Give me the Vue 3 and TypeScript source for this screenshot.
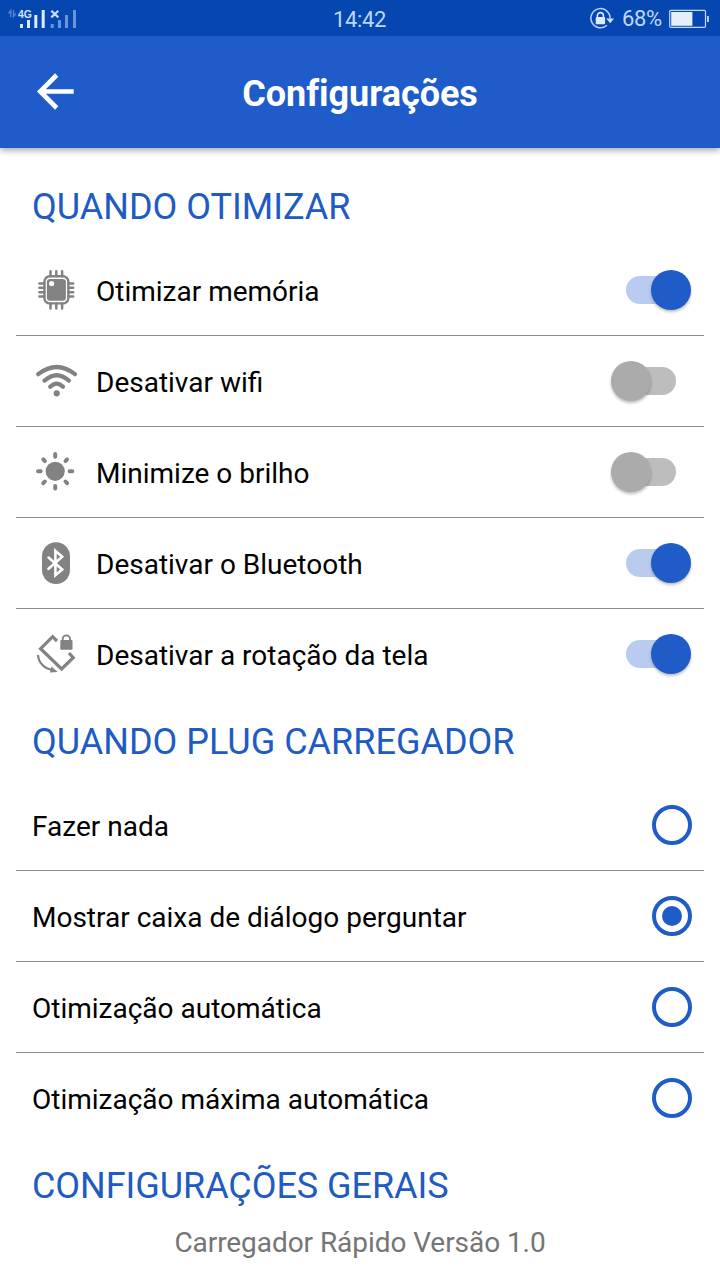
<script setup lang="ts">
import { ref } from 'vue'

type IconName = 'chip' | 'wifi' | 'sun' | 'bluetooth' | 'rotation'

interface Toggle {
  icon: IconName
  label: string
  on: boolean
}

const toggles = ref<Toggle[]>([
  { icon: 'chip', label: 'Otimizar memória', on: true },
  { icon: 'wifi', label: 'Desativar wifi', on: false },
  { icon: 'sun', label: 'Minimize o brilho', on: false },
  { icon: 'bluetooth', label: 'Desativar o Bluetooth', on: true },
  { icon: 'rotation', label: 'Desativar a rotação da tela', on: true },
])

const options: string[] = [
  'Fazer nada',
  'Mostrar caixa de diálogo perguntar',
  'Otimização automática',
  'Otimização máxima automática',
]
const selected = ref(1)
</script>

<template>
  <div class="screen">
    <div class="status">
      <svg class="signal" width="80" height="36" viewBox="0 0 80 36">
        <g stroke="#c8dcf8" stroke-width="1.5" opacity=".4" fill="none">
          <path d="M10.8 16V9.6L8.5 12.5M13.6 9v6.4l2.3-2.8" />
        </g>
        <text x="18" y="16.8" class="net" textLength="14" lengthAdjust="spacingAndGlyphs">4G</text>
        <path fill="#dbeafd" d="M20 23h3v4h-3zM27 19h3v8h-3zM34.3 14h3v13h-3zM41.7 9h3v18h-3z" />
        <path fill="#6995da" d="M50.7 23h3v4h-3zM58 19h3v8h-3zM65 14h3v13h-3zM73 9h3v18h-3z" />
        <path stroke="#c8dcf8" stroke-width="2.2" d="M51.3 9.8l7 6.6M58.3 9.8l-7 6.6" />
      </svg>
      <span class="clock">14:42</span>
      <div class="power">
        <svg width="26" height="24" viewBox="0 0 26 24">
          <path fill="none" stroke="#b9d3f7" stroke-width="1.5" d="M20.1 11.5A9.6 9.6 0 1 0 17 18.3" />
          <path fill="#d0e2fa" d="M16.2 11.6h7.8l-3.8 4.6z" />
          <rect x="5.7" y="9.9" width="9.4" height="7.4" rx="1" fill="#dbeafd" />
          <path fill="none" stroke="#dbeafd" stroke-width="1.6" d="M7.4 10.4V8.6a3 3 0 0 1 6 0v1.8" />
        </svg>
        <span class="percent">68%</span>
        <svg width="42" height="20" viewBox="0 0 42 20">
          <rect x=".7" y="1.4" width="35.8" height="17" rx="1.2" fill="none" stroke="#c3daf9" stroke-width="1.2" />
          <rect x="2.2" y="3" width="21.2" height="13.8" fill="#e5eefb" />
          <rect x="38" y="7" width="1.8" height="6" fill="#c3daf9" />
        </svg>
      </div>
    </div>

    <header class="bar">
      <svg class="back" width="40" height="40" viewBox="0 0 40 40">
        <path d="M37.7 19.5H5M20.7 3L4.2 19.5 20.7 36" fill="none" stroke="#fff" stroke-width="4.6" />
      </svg>
      <h1>Configurações</h1>
    </header>

    <main>
      <h2><span>QUANDO OTIMIZAR</span></h2>
      <ul>
        <li v-for="t in toggles" :key="t.icon" class="row">
          <svg class="icon" width="48" height="48" viewBox="0 0 48 48">
            <template v-if="t.icon === 'chip'">
              <path class="line" stroke-width="2.5" stroke-linecap="round" d="M18.5 5.2v5M24.3 5.2v5M30.1 5.2v5M18.5 37.5v5M24.3 37.5v5M30.1 37.5v5M7.4 17.4h5M7.4 21.8h5M7.4 26.2h5M7.4 30.6h5M36.2 17.4h5M36.2 21.8h5M36.2 26.2h5M36.2 30.6h5" />
              <rect class="line" stroke-width="2.4" x="12.4" y="10.2" width="24" height="27.2" rx="5.5" />
              <rect class="solid" x="14.9" y="12.9" width="19" height="21.8" rx="3.2" />
              <circle cx="19.6" cy="17.6" r="2.6" fill="#fff" />
            </template>
            <template v-else-if="t.icon === 'wifi'">
              <path class="line" stroke-width="4.2" stroke-linecap="round" d="M6.2 17.2Q24.7 2.8 43 17.2M12.5 23.6Q24.7 12.8 36.9 23.6M18.2 29.8Q24.7 23.4 31 29.8" />
              <circle class="solid" cx="24.7" cy="36.3" r="3.1" />
            </template>
            <template v-else-if="t.icon === 'sun'">
              <circle class="solid" cx="23.2" cy="23.3" r="9.6" />
              <path class="line" stroke-width="4" stroke-linecap="round" d="M23.2 6v2.7M23.2 37.9v2.7M6 23.3h2.7M37.6 23.3h2.7M11.3 11.4l1.6 1.7M35.1 11.4l-1.6 1.7M11.3 35.2l1.6-1.7M35.1 35.2l-1.6-1.7" />
            </template>
            <template v-else-if="t.icon === 'bluetooth'">
              <rect class="solid" x="10" y="3.2" width="28" height="41.8" rx="14" />
              <path fill="none" stroke="#fff" stroke-width="2.6" stroke-linecap="round" d="M16.5 18.6L30.2 30.4 23.4 36.2V11.8L30.2 17.8 16.5 29.8" />
            </template>
            <template v-else>
              <path class="line" stroke-width="3.2" d="M25 11L20.6 6.7 8.6 18.7 29.6 38.9 41.2 27.6 37 23" />
              <path class="line" stroke-width="2.2" d="M6 25C6.5 32.5 12 39.3 22 40.2" />
              <path class="solid" d="M19.3 36.6L25.7 42 18 42.4z" />
              <rect class="solid" x="28.3" y="10.1" width="12.2" height="9.6" rx="1" />
              <path class="line" stroke-width="1.9" d="M30.7 11V9a3.6 3.6 0 0 1 7.3 0V11" />
            </template>
          </svg>
          <span class="label">{{ t.label }}</span>
          <button class="switch" :class="{ on: t.on }" @click="t.on = !t.on"><i></i></button>
        </li>
      </ul>

      <h2><span>QUANDO PLUG CARREGADOR</span></h2>
      <ul>
        <li v-for="(o, i) in options" :key="o" class="row option" @click="selected = i">
          <span class="label">{{ o }}</span>
          <span class="radio" :class="{ on: selected === i }"></span>
        </li>
      </ul>

      <h2 class="general"><span>CONFIGURAÇÕES GERAIS</span></h2>
      <p class="version">Carregador Rápido Versão 1.0</p>
    </main>
  </div>
</template>

<style>
body {
  margin: 0;
  background: #fff;
}
</style>

<style scoped>
.screen {
  width: 720px;
  height: 1280px;
  overflow: hidden;
  background: #fff;
  font-family: Roboto, "Noto Sans", sans-serif;
  color: #000;
}
.status {
  position: relative;
  z-index: 1;
  height: 36px;
  background: #0646b0;
  display: grid;
  grid-template-columns: 1fr auto 1fr;
  align-items: center;
  color: #bdd8fb;
}
.net {
  font: bold 10.5px "Liberation Sans", sans-serif;
  fill: #cfe2fb;
}
.clock,
.percent {
  font-size: 22px;
  line-height: 36px;
  letter-spacing: -0.35px;
  padding-top: 2px;
}
.clock {
  margin-right: 1px;
}
.percent {
  padding: 0;
  width: 40px;
  margin: 0 7px 0 6px;
}
.power {
  display: flex;
  align-items: center;
  justify-content: flex-end;
  padding-right: 9px;
}
.bar {
  height: 112px;
  background: #1f5cc9;
  display: grid;
  grid-template-columns: 80px 1fr 80px;
  align-items: center;
  box-shadow: 0 2px 7px rgba(0, 0, 0, 0.38);
  position: relative;
}
.back {
  margin-left: 36px;
}
h1 {
  margin: 4px 0 0;
  font-size: 36px;
  line-height: 44px;
  font-weight: 700;
  letter-spacing: -0.04px;
  color: #fff;
  text-align: center;
}
main {
  padding: 16px 16px 0;
}
h2 {
  margin: 0;
  height: 81px;
  box-sizing: border-box;
  padding: 5px 16px 0;
  font-size: 36px;
  line-height: 76px;
  font-weight: 400;
  color: #205bc4;
  white-space: nowrap;
}
.general {
  letter-spacing: -0.06px;
}
ul {
  margin: 0;
  padding: 0;
  list-style: none;
}
.row {
  height: 90px;
  display: flex;
  align-items: center;
  padding: 0 12px 0 16px;
  border-bottom: 1px solid #8c8c8c;
}
.row:last-child {
  border-bottom: 0;
}
.icon {
  margin-right: 16px;
}
.line {
  fill: none;
  stroke: #828282;
}
.solid {
  fill: #828282;
}
.label {
  flex: 1;
  font-size: 28px;
  line-height: 36px;
  padding-top: 3px;
  white-space: nowrap;
}
.switch {
  width: 50px;
  height: 28px;
  border: 0;
  border-radius: 14px;
  padding: 0;
  margin-right: 16px;
  background: #bdbdbd;
  display: flex;
  align-items: center;
}
.switch i {
  flex: none;
  width: 40px;
  height: 40px;
  border-radius: 50%;
  background: #ababab;
  margin-left: -15px;
  box-shadow: 0 2px 3px rgba(0, 0, 0, 0.25);
}
.switch.on {
  background: #b9ccef;
}
.switch.on i {
  background: #1f5cc8;
  margin-left: 25px;
}
.radio {
  width: 40px;
  height: 40px;
  box-sizing: border-box;
  border: 4px solid #1f5cc8;
  border-radius: 50%;
  display: grid;
  place-items: center;
}
.radio.on::after {
  content: "";
  width: 20px;
  height: 20px;
  border-radius: 50%;
  background: #1f5cc8;
}
.version {
  margin: 0;
  font-size: 28px;
  line-height: 38px;
  letter-spacing: -0.06px;
  text-align: center;
  color: #757575;
}
</style>
